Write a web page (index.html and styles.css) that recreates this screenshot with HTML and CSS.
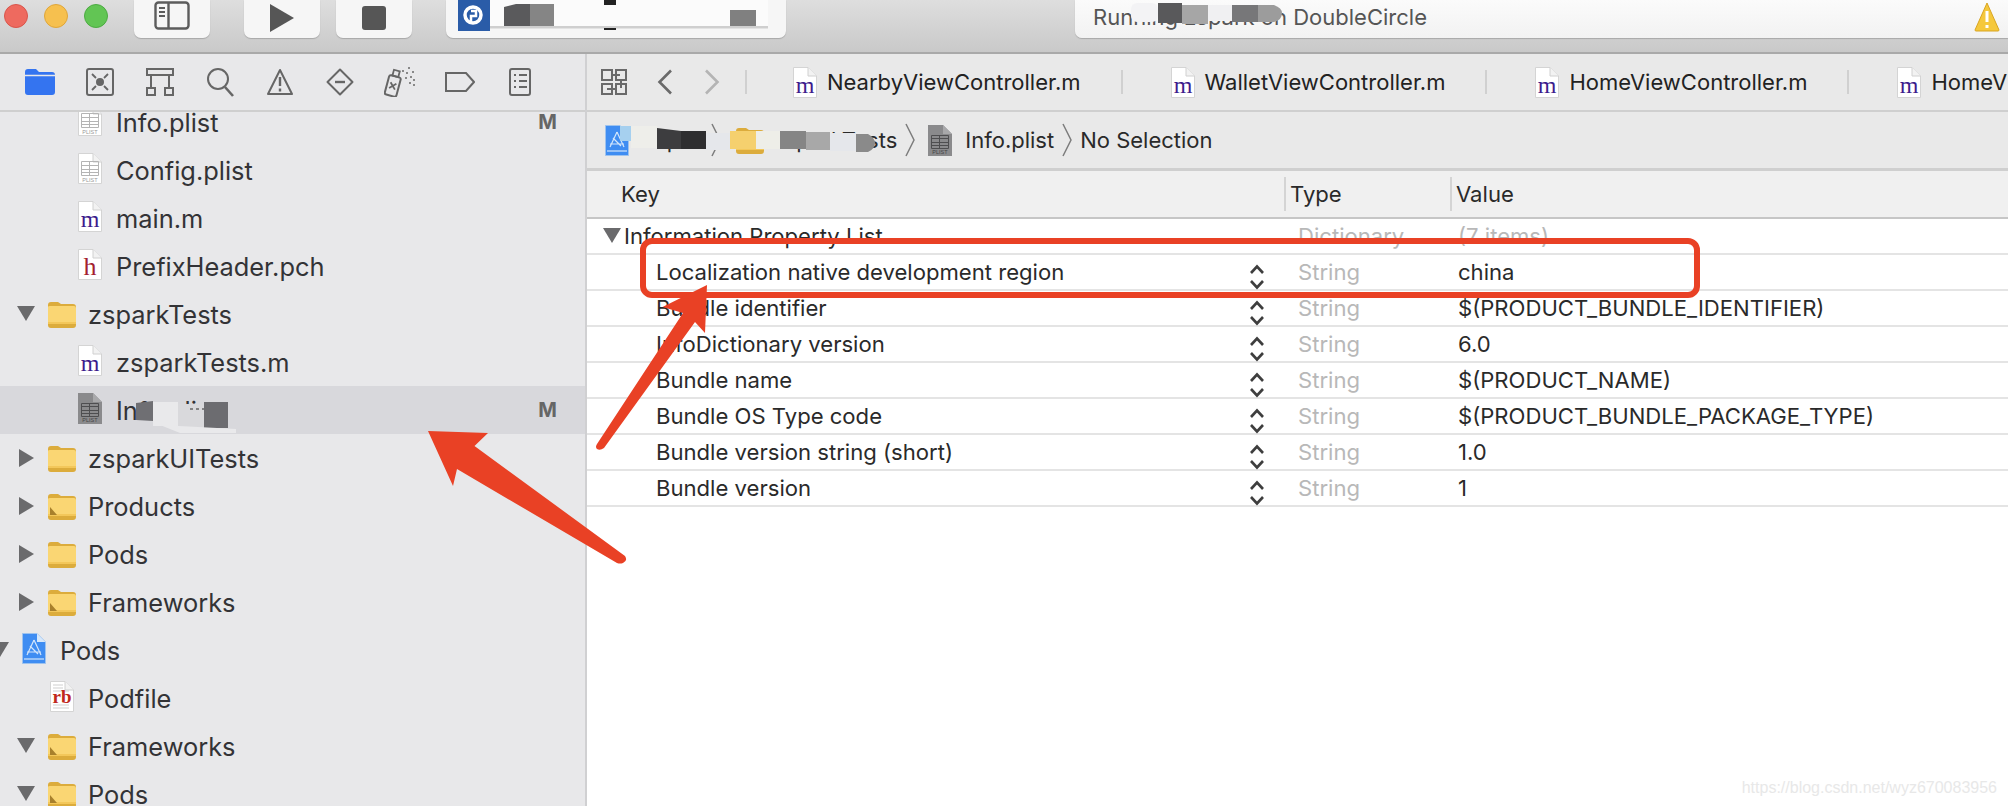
FILE: index.html
```html
<!DOCTYPE html>
<html lang="en">
<head>
<meta charset="utf-8">
<title>Xcode Info.plist</title>
<link rel="stylesheet" href="styles.css">
</head>
<body>
<svg class="defs" width="0" height="0" aria-hidden="true">
  <defs>
    <symbol id="page" viewBox="0 0 24 31">
      <path d="M.5.5H15L23.5 9V30.5H.5Z" fill="#fff" stroke="#d4d4d4"/>
      <path d="M15 .5V9H23.5" fill="#f2f2f2" stroke="#d0d0d0"/>
    </symbol>
    <symbol id="plist" viewBox="0 0 24 31">
      <use href="#page" width="24" height="31"/>
      <g fill="none" stroke="#b4b4b4" stroke-width="1"><path d="M3.500 8.500H20.500V22.500H3.500ZM3.500 12.500H20.500M3.500 16.500H20.500M3.500 19.500H20.500M11.500 8.500V22.500"/></g>
      <text x="12" y="28.500" class="tiny">PLIST</text>
    </symbol>
    <symbol id="plist-dark" viewBox="0 0 24 31">
      <path d="M0 0H15L24 9V31H0Z" fill="#8a8a8c"/>
      <path d="M15 0V9H24Z" fill="#a8a8aa"/>
      <g fill="none" stroke="#4e4e50" stroke-width="1"><path d="M3.500 10.500H20.500V23.500H3.500ZM3.500 13.500H20.500M3.500 17.500H20.500M3.500 20.500H20.500M11.500 10.500V23.500"/></g>
      <text x="12" y="29" class="tiny dark">PLIST</text>
    </symbol>
    <symbol id="m" viewBox="0 0 24 31">
      <use href="#page" width="24" height="31"/>
      <text x="12" y="26" class="letter purple">m</text>
    </symbol>
    <symbol id="h" viewBox="0 0 24 31">
      <use href="#page" width="24" height="31"/>
      <text x="12" y="26" class="letter red">h</text>
    </symbol>
    <symbol id="rb" viewBox="0 0 24 31">
      <use href="#page" width="24" height="31"/>
      <g stroke="#cfcfcf"><path d="M3 4H13M3 7H13M3 10H19M3 24H19M3 27H19"/></g>
      <text x="12" y="22" class="letter rb">rb</text>
    </symbol>
    <symbol id="folder" viewBox="0 0 28 27">
      <path d="M0 4Q0 1 3 1H10L13 3H25Q28 3 28 6V24Q28 27 25 27H3Q0 27 0 24Z" fill="#dcac3c"/>
      <path d="M0 6Q0 5 2 5H26Q28 5 28 7V23H0Z" fill="#fad673"/>
      <path d="M0 21H28V23H0Z" fill="#f3c75a"/>
    </symbol>
    <symbol id="folder-ref" viewBox="0 0 28 27">
      <use href="#folder" width="28" height="27"/>
      <path d="M2 14L9 22H2Z" fill="#a8802c"/>
    </symbol>
    <symbol id="proj" viewBox="0 0 24 31">
      <path d="M.5.500H15L23.500 9V30.500H.5Z" fill="#3f8df2" stroke="#9ec3ee"/>
      <path d="M15 .5V9H23.500" fill="#d6e8fb"/>
      <g fill="none" stroke="#d3e6fb" stroke-width="1.200"><path d="M12 7L5 22M12 7L19 22M5 19H19M8 13L16 21"/><path d="M2 26H22"/></g>
    </symbol>
    <symbol id="stepper" viewBox="0 0 16 28">
      <path d="M2 10L8 3.500L14 10M2 18L8 24.500L14 18" fill="none" stroke="#3e3e3e" stroke-width="2.600"/>
    </symbol>
    <symbol id="crumb" viewBox="0 0 10 34">
      <path d="M1 1L9 17L1 33" fill="none" stroke="#7c7c7c" stroke-width="1.500"/>
    </symbol>
  </defs>
</svg>

<div class="app">
  <header class="toolbar">
    <div class="lights">
      <span class="light light-red"></span>
      <span class="light light-yellow"></span>
      <span class="light light-green"></span>
    </div>
    <div class="tool-btn btn-nav">
      <svg width="36" height="30" viewBox="0 0 36 30"><rect x="1.500" y="1.500" width="33" height="26" rx="3" fill="none" stroke="#5c5c5c" stroke-width="2.400"/><path d="M14.500 1.500V27.500" stroke="#5c5c5c" stroke-width="2.400"/><path d="M5 7H11M5 11H11M5 15H11" stroke="#5c5c5c" stroke-width="2"/></svg>
    </div>
    <div class="tool-btn btn-run">
      <svg width="28" height="30" viewBox="0 0 28 30"><path d="M2 1L26 15L2 29Z" fill="#565656"/></svg>
    </div>
    <div class="tool-btn btn-stop">
      <svg width="24" height="24" viewBox="0 0 24 24"><rect width="24" height="24" rx="3" fill="#565656"/></svg>
    </div>
    <div class="scheme">
      <div class="scheme-logo">
        <svg width="22" height="24" viewBox="0 0 22 24"><circle cx="10" cy="11" r="8" fill="none" stroke="#fff" stroke-width="3.500"/><path d="M8 7H13V12H8V19" fill="none" stroke="#fff" stroke-width="2.500"/></svg>
      </div>
      <span class="scheme-name">zspark &gt; DoubleCircle</span>
    </div>
    <div class="status">
      <span class="status-text">Running zspark on DoubleCircle</span>
      <svg class="warn" width="26" height="30" viewBox="0 0 26 30"><path d="M13 1L25 28Q25 29 24 29H2Q1 29 1 28Z" fill="#f5c83c" stroke="#d9a520"/><path d="M13 9V20M13 23V26" stroke="#fff" stroke-width="3"/></svg>
    </div>
  </header>

  <div class="workspace">
    <aside class="sidebar">
      <nav class="navtabs">
        <span class="navtab"><svg width="30" height="26" viewBox="0 0 30 26"><path d="M0 3Q0 0 3 0H11L14 3H27Q30 3 30 6V23Q30 26 27 26H3Q0 26 0 23Z" fill="#3474f0"/><path d="M0 6.500H30" stroke="#e8e8ea" stroke-width="1.500"/></svg></span>
        <span class="navtab"><svg width="28" height="28" viewBox="0 0 28 28"><rect x="1" y="1" width="26" height="26" rx="2" fill="none" stroke="#666" stroke-width="2"/><circle cx="14" cy="14" r="4" fill="#666"/><path d="M6 6L10 10M22 6L18 10M6 22L10 18M22 22L18 18" stroke="#666" stroke-width="1.800"/></svg></span>
        <span class="navtab"><svg width="28" height="28" viewBox="0 0 28 28"><g fill="none" stroke="#666" stroke-width="2"><rect x="1" y="1" width="26" height="6"/><rect x="1" y="20" width="8" height="7"/><rect x="19" y="20" width="8" height="7"/><path d="M5 7V20M23 7V20"/></g></svg></span>
        <span class="navtab"><svg width="28" height="30" viewBox="0 0 28 30"><circle cx="12" cy="12" r="10" fill="none" stroke="#666" stroke-width="2"/><path d="M19 20L27 29" stroke="#666" stroke-width="2.600"/></svg></span>
        <span class="navtab"><svg width="26" height="28" viewBox="0 0 26 28"><path d="M13 2L25 26H1Z" fill="none" stroke="#666" stroke-width="2" stroke-linejoin="round"/><path d="M13 9V18M13 20.500V23.500" stroke="#666" stroke-width="2.400"/></svg></span>
        <span class="navtab"><svg width="28" height="28" viewBox="0 0 28 28"><path d="M14 1.500L26.500 14L14 26.500L1.500 14Z" fill="none" stroke="#666" stroke-width="2" stroke-linejoin="round"/><path d="M9 14H19" stroke="#666" stroke-width="2.400"/></svg></span>
        <span class="navtab"><svg width="32" height="30" viewBox="0 0 32 30"><g transform="rotate(15 9 18)"><rect x="3" y="9" width="12" height="20" rx="2" fill="none" stroke="#666" stroke-width="2"/><rect x="6" y="3" width="6" height="6" fill="none" stroke="#666" stroke-width="1.800"/><path d="M6 16L12 22M12 16L6 22" stroke="#666" stroke-width="1.800"/></g><g fill="#888"><rect x="18" y="3" width="2" height="2"/><rect x="24" y="0" width="2" height="2"/><rect x="22" y="5" width="2" height="2"/><rect x="28" y="4" width="2" height="2"/><rect x="26" y="9" width="2" height="2"/><rect x="21" y="10" width="2" height="2"/><rect x="29" y="12" width="2" height="2"/><rect x="25" y="15" width="2" height="2"/><rect x="29" y="17" width="2" height="2"/></g></svg></span>
        <span class="navtab"><svg width="30" height="20" viewBox="0 0 30 20"><path d="M1 1H21L29 10L21 19H1Z" fill="none" stroke="#666" stroke-width="2"/></svg></span>
        <span class="navtab"><svg width="22" height="28" viewBox="0 0 22 28"><rect x="1" y="1" width="20" height="26" rx="2" fill="none" stroke="#666" stroke-width="2"/><path d="M5 7H7M10 7H18M5 13H7M10 13H18M5 19H7M10 19H18" stroke="#666" stroke-width="2"/></svg></span>
      </nav>
      <div class="tree">
        <ul class="tree-list">
          <li class="row file"><svg class="ficon"><use href="#plist"/></svg><span class="name">Info.plist</span><b class="badge">M</b></li>
          <li class="row file"><svg class="ficon"><use href="#plist"/></svg><span class="name">Config.plist</span></li>
          <li class="row file"><svg class="ficon"><use href="#m"/></svg><span class="name">main.m</span></li>
          <li class="row file"><svg class="ficon"><use href="#h"/></svg><span class="name">PrefixHeader.pch</span></li>
          <li class="row group"><span class="twisty open"></span><svg class="gicon"><use href="#folder"/></svg><span class="name">zsparkTests</span></li>
          <li class="row file"><svg class="ficon"><use href="#m"/></svg><span class="name">zsparkTests.m</span></li>
          <li class="row file selected"><svg class="ficon"><use href="#plist-dark"/></svg><span class="name">Info.plist</span><b class="badge">M</b></li>
          <li class="row group"><span class="twisty"></span><svg class="gicon"><use href="#folder"/></svg><span class="name">zsparkUITests</span></li>
          <li class="row group"><span class="twisty"></span><svg class="gicon"><use href="#folder-ref"/></svg><span class="name">Products</span></li>
          <li class="row group"><span class="twisty"></span><svg class="gicon"><use href="#folder"/></svg><span class="name">Pods</span></li>
          <li class="row group"><span class="twisty"></span><svg class="gicon"><use href="#folder-ref"/></svg><span class="name">Frameworks</span></li>
          <li class="row project"><span class="twisty open"></span><svg class="ficon"><use href="#proj"/></svg><span class="name">Pods</span></li>
          <li class="row podfile"><svg class="ficon"><use href="#rb"/></svg><span class="name">Podfile</span></li>
          <li class="row group"><span class="twisty open"></span><svg class="gicon"><use href="#folder-ref"/></svg><span class="name">Frameworks</span></li>
          <li class="row group"><span class="twisty open"></span><svg class="gicon"><use href="#folder-ref"/></svg><span class="name">Pods</span></li>
        </ul>
      </div>
    </aside>

    <main class="editor">
      <div class="tabbar">
        <svg class="related" width="26" height="26" viewBox="0 0 26 26"><g fill="none" stroke="#6a6a6a" stroke-width="2"><rect x="1" y="1" width="10" height="10"/><rect x="15" y="1" width="10" height="10"/><rect x="1" y="15" width="10" height="10"/><rect x="15" y="15" width="10" height="10"/><path d="M11 6H19M20 11V19M6 20H15"/></g></svg>
        <svg class="back" width="16" height="26" viewBox="0 0 16 26"><path d="M14 1.500L2.500 13L14 24.500" fill="none" stroke="#6a6a6a" stroke-width="2.600"/></svg>
        <svg class="forward" width="16" height="26" viewBox="0 0 16 26"><path d="M2 1.500L13.500 13L2 24.500" fill="none" stroke="#b4b4b4" stroke-width="2.600"/></svg>
        <span class="tab-first"></span>
        <div class="tab"><svg class="ficon"><use href="#m"/></svg><span class="tab-name">NearbyViewController.m</span></div>
        <div class="tab"><svg class="ficon"><use href="#m"/></svg><span class="tab-name">WalletViewController.m</span></div>
        <div class="tab"><svg class="ficon"><use href="#m"/></svg><span class="tab-name">HomeViewController.m</span></div>
        <div class="tab"><svg class="ficon"><use href="#m"/></svg><span class="tab-name">HomeViewController.h</span></div>
      </div>
      <div class="crumbs">
        <svg class="ficon crumb-proj"><use href="#proj"/></svg>
        <span class="crumb-a">zspark</span>
        <svg class="crumb-sep crumb-sep-first" width="10" height="34"><use href="#crumb"/></svg>
        <svg class="gicon crumb-folder"><use href="#folder"/></svg>
        <span class="crumb-b">zsparkTests</span>
        <svg class="crumb-sep" width="10" height="34"><use href="#crumb"/></svg>
        <svg class="ficon crumb-file"><use href="#plist-dark"/></svg>
        <span class="crumb-c">Info.plist</span>
        <svg class="crumb-sep" width="10" height="34"><use href="#crumb"/></svg>
        <span class="crumb-d">No Selection</span>
      </div>
      <div class="plist">
        <div class="plist-head">
          <span class="col-key head-key">Key</span>
          <span class="col-type head-cell">Type</span>
          <span class="col-value head-cell">Value</span>
        </div>
        <div class="plist-row root">
          <span class="col-key"><span class="twisty open"></span>Information Property List</span>
          <span class="col-type cell-type">Dictionary</span>
          <span class="col-value cell-muted">(7 items)</span>
        </div>
        <div class="plist-row">
          <span class="col-key">Localization native development region<svg class="step" width="16" height="28"><use href="#stepper"/></svg></span>
          <span class="col-type cell-type">String</span><span class="col-value">china</span>
        </div>
        <div class="plist-row">
          <span class="col-key">Bundle identifier<svg class="step" width="16" height="28"><use href="#stepper"/></svg></span>
          <span class="col-type cell-type">String</span><span class="col-value">$(PRODUCT_BUNDLE_IDENTIFIER)</span>
        </div>
        <div class="plist-row">
          <span class="col-key">InfoDictionary version<svg class="step" width="16" height="28"><use href="#stepper"/></svg></span>
          <span class="col-type cell-type">String</span><span class="col-value">6.0</span>
        </div>
        <div class="plist-row">
          <span class="col-key">Bundle name<svg class="step" width="16" height="28"><use href="#stepper"/></svg></span>
          <span class="col-type cell-type">String</span><span class="col-value">$(PRODUCT_NAME)</span>
        </div>
        <div class="plist-row">
          <span class="col-key">Bundle OS Type code<svg class="step" width="16" height="28"><use href="#stepper"/></svg></span>
          <span class="col-type cell-type">String</span><span class="col-value">$(PRODUCT_BUNDLE_PACKAGE_TYPE)</span>
        </div>
        <div class="plist-row">
          <span class="col-key">Bundle version string (short)<svg class="step" width="16" height="28"><use href="#stepper"/></svg></span>
          <span class="col-type cell-type">String</span><span class="col-value">1.0</span>
        </div>
        <div class="plist-row">
          <span class="col-key">Bundle version<svg class="step" width="16" height="28"><use href="#stepper"/></svg></span>
          <span class="col-type cell-type">String</span><span class="col-value">1</span>
        </div>
      </div>
    </main>
  </div>

  <svg class="markup" width="2008" height="806" viewBox="0 0 2008 806" aria-hidden="true">
    <!-- scheme smear -->
    <rect x="490" y="0" width="278" height="26" fill="#fbfbfb"/>
    <rect x="490" y="26" width="278" height="2.500" fill="#cfcfcf"/>
    <rect x="604" y="0" width="12" height="5" fill="#222"/>
    <rect x="604" y="28" width="12" height="2" fill="#222"/>
    <rect x="504" y="7" width="26" height="19" fill="#5a5a5c"/>
    <path d="M504 7L516 4H530V7Z" fill="#5a5a5c"/>
    <rect x="530" y="4" width="24" height="22" fill="#858585"/>
    <rect x="730" y="10" width="26" height="16" fill="#808080"/>
    <!-- status smear -->
    <rect x="1131" y="3" width="27" height="19" rx="6" fill="#f3f3f5"/>
    <rect x="1158" y="3" width="24" height="20" fill="#59595b"/>
    <rect x="1182" y="5" width="26" height="19" fill="#a6a6a6"/>
    <rect x="1208" y="5" width="24" height="16" fill="#f0f0f2"/>
    <rect x="1232" y="5" width="26" height="17" fill="#777779"/>
    <path d="M1258 5H1274Q1282 8 1282 13Q1282 20 1274 22H1258Z" fill="#9c9c9c"/>
    <!-- breadcrumb smears -->
    <rect x="620" y="126" width="11" height="15" fill="#a6d0ef"/>
    <rect x="631" y="126" width="26" height="22" fill="#eeeeea"/>
    <path d="M657 128L681 131V149H657Z" fill="#3d3d3f"/>
    <rect x="681" y="131" width="25" height="18" fill="#2e2e30"/>
    <path d="M706 133H730V150H706Z" fill="#e5e7eb"/>
    <rect x="730" y="131" width="26" height="18" fill="#f5d06e"/>
    <rect x="756" y="131" width="24" height="18" fill="#eeeee8"/>
    <rect x="780" y="131" width="26" height="18" fill="#858585"/>
    <rect x="806" y="132" width="24" height="18" fill="#a8a8a8"/>
    <rect x="830" y="133" width="26" height="18" fill="#e5e7eb"/>
    <path d="M856 134H868Q875 138 875 143Q875 149 868 152H856Z" fill="#8a8a8a"/>
    <!-- sidebar row smear -->
    <path d="M136 403L153 401V421L136 420Z" fill="#6f6f73"/>
    <rect x="153" y="402" width="25" height="24" fill="#e9e9eb"/>
    <rect x="178" y="404" width="26" height="24" fill="#d9d9dc"/>
    <path d="M190 409H212" stroke="#666" stroke-width="1.500" stroke-dasharray="3 3"/>
    <path d="M204 402H228V410H215V428H204Z" fill="#6c6c70"/>
    <path d="M215 410H228V428H215Z" fill="#6c6c70"/>
    <path d="M160 425L236 429V433H180Z" fill="#e9e9eb"/>
    <!-- highlight box -->
    <rect x="643" y="241" width="1054" height="54" rx="9" fill="none" stroke="#e94125" stroke-width="6"/>
    <!-- arrow to the file row -->
    <path d="M428 431L488 433L474.500 446L625 556Q628 561 623 563Q620 564 617 563L457 469L453 486Z" fill="#e94125"/>
    <!-- arrow to the region row -->
    <path d="M707 285L705 333L695 322L604 448Q600 451 597 449Q595 447 597 444L683 313L662.500 307Z" fill="#e94125"/>
  </svg>
  <span class="watermark">https://blog.csdn.net/wyz670083956</span>
</div>
</body>
</html>
```

FILE: styles.css
```css
* { box-sizing: border-box; }
html, body { margin: 0; padding: 0; }
body { width: 2008px; height: 806px; overflow: hidden; font-family: Inter, "Noto Sans", sans-serif; background: #fff; }
.defs { position: absolute; }
.tiny { font: 5.5px "Liberation Sans", sans-serif; fill: #999; text-anchor: middle; }
.tiny.dark { fill: #444; }
.letter { font-family: "Liberation Serif", serif; text-anchor: middle; }
.purple { fill: #3c1c8c; font-size: 24px; }
.red { fill: #a3202e; font-size: 26px; }
.rb { fill: #c0281c; font-size: 19px; font-weight: 700; }

.app { position: relative; width: 2008px; height: 806px; overflow: hidden; display: flex; flex-direction: column; }

.toolbar { flex: none; height: 54px; display: flex; align-items: flex-start; padding-left: 4px; background: linear-gradient(#dedede, #c9c9c9); border-bottom: 2px solid #a9a9a9; }
.lights { display: flex; gap: 16px; padding-top: 4px; }
.light { width: 24px; height: 24px; border-radius: 50%; }
.light-red { background: #ee6a5f; border: 1px solid #d9554b; }
.light-yellow { background: #f6c04f; border: 1px solid #dfa63a; }
.light-green { background: #62c554; border: 1px solid #4cab42; }
.tool-btn { width: 76px; height: 38px; display: flex; align-items: center; justify-content: center; background: #f6f6f6; border-radius: 0 0 7px 7px; box-shadow: 0 1px 1px #a8a8a8; padding-bottom: 8px; }
.btn-nav { margin-left: 26px; padding-bottom: 6px; }
.btn-run { margin-left: 34px; padding-bottom: 2px; }
.btn-stop { margin-left: 16px; padding-bottom: 2px; }
.scheme { width: 340px; height: 38px; margin-left: 34px; padding-left: 12px; display: flex; background: #f6f6f6; border-radius: 0 0 7px 7px; box-shadow: 0 1px 1px #a8a8a8; }
.scheme-logo { width: 32px; height: 31px; background: #2a5ca8; display: flex; align-items: center; justify-content: center; }
.scheme-name { margin-left: 14px; font-size: 20px; color: #333; line-height: 30px; white-space: nowrap; }
.status { flex: 1; height: 38px; margin-left: 289px; padding-left: 18px; padding-right: 8px; display: flex; justify-content: space-between; background: linear-gradient(#fbfbfb, #f2f2f2); border-radius: 0 0 0 7px; box-shadow: 0 1px 1px #a8a8a8; }
.status-text { font-size: 22px; line-height: 34px; color: #555; white-space: nowrap; }
.warn { margin-top: 2px; }

.workspace { flex: 1; min-height: 0; display: flex; }
.sidebar { flex: none; width: 587px; display: flex; flex-direction: column; background: #e8e8ea; border-right: 2px solid #d0d0d2; }
.navtabs { flex: none; height: 58px; padding-left: 10px; display: flex; align-items: center; border-bottom: 2px solid #cfcfcf; }
.navtab { width: 60px; display: flex; justify-content: center; }
.tree { flex: 1; min-height: 0; overflow: hidden; }
.tree-list { list-style: none; margin: -14px 0 0; padding: 0; }

.row { height: 48px; display: flex; align-items: center; font-size: 25.4px; color: #333336; white-space: nowrap; }
.row.file { padding-left: 78px; }
.row.file .name { margin-left: 14px; }
.row.group { padding-left: 16px; }
.row.group .name { margin-left: 12px; }
.row.project { padding-left: 0; }
.row.project .twisty { margin-left: -10px; }
.row.project .name { margin-left: 14px; }
.row.podfile { padding-left: 50px; }
.row.podfile .name { margin-left: 14px; }
.row.selected { background: #d8d8dc; }
.row .ficon { margin-bottom: 3px; }
.ficon { width: 24px; height: 31px; flex: none; display: block; }
.gicon { width: 28px; height: 27px; flex: none; display: block; }
.badge { margin-left: auto; margin-right: 28px; font-size: 20px; font-weight: 700; color: #666; }
.twisty { width: 32px; flex: none; display: block; position: relative; height: 20px; }
.twisty::before { content: ""; position: absolute; left: 3px; top: 1px; border-left: 15px solid #6a6a6c; border-top: 9px solid transparent; border-bottom: 9px solid transparent; }
.twisty.open::before { left: 1px; top: 2px; border-top: 15px solid #6a6a6c; border-left: 9px solid transparent; border-right: 9px solid transparent; border-bottom: 0; }

.editor { flex: 1; min-width: 0; display: flex; flex-direction: column; background: #fff; }
.tabbar { flex: none; height: 58px; display: flex; align-items: center; padding-left: 14px; background: #e9e9e9; border-bottom: 2px solid #cfcfcf; overflow: hidden; font-size: 22px; color: #222; white-space: nowrap; }
.back { margin-left: 30px; flex: none; }
.forward { margin-left: 31px; flex: none; }
.related { flex: none; }
.tab-first { width: 2px; height: 24px; background: #d0d0d0; margin-left: 25px; margin-right: -2px; flex: none; }
.tab { display: flex; align-items: center; height: 24px; padding-left: 48px; padding-right: 40px; border-right: 2px solid #d0d0d0; flex: none; }
.tab:last-child { border-right: 0; }
.tab-name { margin-left: 10px; }
.crumbs { flex: none; height: 59px; display: flex; align-items: center; padding-left: 18px; background: #e9e9e9; border-bottom: 3px solid #cfcfcf; font-size: 22px; color: #2a2a2a; white-space: nowrap; }
.crumb-a { margin-left: 14px; }
.crumb-sep { margin: 0 8px; flex: none; }
.crumb-sep-first { margin: 0 15px 0 -3px; }
.crumb-b { margin-left: 9px; }
.crumb-file { margin-left: 5px; }
.crumb-c { margin-left: 13px; }

.plist { flex: 1; min-height: 0; font-size: 22.1px; color: #2a2a2a; white-space: nowrap; }
.plist-head { height: 48px; display: flex; align-items: center; background: #f0f0f0; border-bottom: 2px solid #c6c6c6; }
.head-cell { height: 34px; line-height: 34px; border-left: 2px solid #d4d4d4; padding-left: 4px; }
.plist-row { height: 36px; display: flex; align-items: center; border-bottom: 2px solid #e4e4e4; }
.col-key { width: 697px; flex: none; padding-left: 69px; display: flex; align-items: center; position: relative; }
.plist-head .col-key { padding-left: 34px; }
.col-type { width: 166px; flex: none; }
.cell-type { padding-left: 14px; color: #b8b8b8; }
.col-value { flex: 1; }
.plist-row .col-value { padding-left: 8px; }
.cell-muted { color: #b8b8b8; }
.root .col-key { padding-left: 16px; }
.root .twisty { width: 21px; height: 16px; }
.root .twisty::before { left: 0; top: 0; }
.step { position: absolute; left: 662px; top: 50%; margin-top: -9px; }

.markup { position: absolute; left: 0; top: 0; pointer-events: none; }
.watermark { position: absolute; right: 11px; bottom: 9px; font: 16px "Liberation Sans", sans-serif; color: #e8e8e8; }
```
